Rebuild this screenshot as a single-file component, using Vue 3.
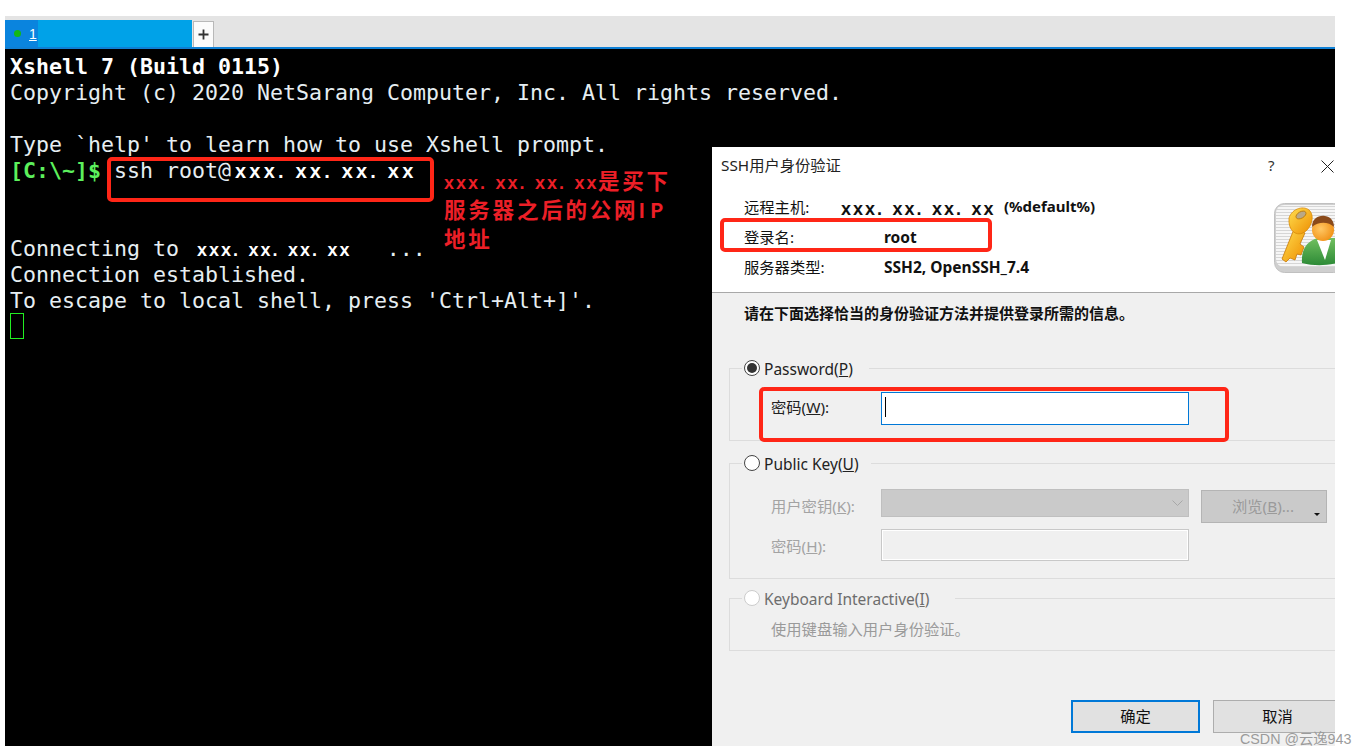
<script setup>
const infoRows = [
  { label: '远程主机:', value: 'xxx. xx. xx. xx', suffix: '(%default%)' },
  { label: '登录名:', value: 'root' },
  { label: '服务器类型:', value: 'SSH2, OpenSSH_7.4' }
]
</script>

<template>
  <div class="page">
    <div class="window">
      <div class="tabbar">
        <div class="tab">
          <span class="tab-num"><i class="dot"></i><u>1</u></span>
          <span class="tab-rest"></span>
        </div>
        <button class="plus" aria-label="new tab">
          <svg width="11" height="11" viewBox="0 0 11 11"><path d="M5.5 0.5v10M0.5 5.5h10" stroke="#333" stroke-width="1.8" fill="none"/></svg>
        </button>
      </div>

      <div class="terminal">
        <div class="line bold">Xshell 7 (Build 0115)</div>
        <div class="line">Copyright (c) 2020 NetSarang Computer, Inc. All rights reserved.</div>
        <div class="line">&nbsp;</div>
        <div class="line">Type `help' to learn how to use Xshell prompt.</div>
        <div class="line"><span class="prompt">[C:\~]$</span> ssh root@<span class="ip-big">xxx. xx. xx. xx</span></div>
        <div class="line">&nbsp;</div>
        <div class="line">&nbsp;</div>
        <div class="line">Connecting to<span class="ip-small ip-conn">xxx. xx. xx. xx</span><span class="dots">...</span></div>
        <div class="line">Connection established.</div>
        <div class="line">To escape to local shell, press 'Ctrl+Alt+]'.</div>
        <div class="cursor"></div>
      </div>

      <div class="mark mark-cmd"></div>
      <div class="note">
        <div><span class="ip-small note-ip">xxx. xx. xx. xx</span>是买下</div>
        <div>服务器之后的公网<span class="note-latin">IP</span></div>
        <div>地址</div>
      </div>

      <section class="dialog">
        <header class="head">
          <div class="titlebar">
            <span class="title">SSH用户身份验证</span>
            <span class="help">?</span>
            <svg class="close" width="13" height="13" viewBox="0 0 13 13"><path d="M0.5 0.5l12 12M12.5 0.5l-12 12" stroke="#222" stroke-width="1" fill="none"/></svg>
          </div>
          <div class="info">
            <div v-for="row in infoRows" :key="row.label" class="info-row">
              <span class="info-label">{{ row.label }}</span>
              <span class="info-value" :class="{ 'ip-small': row.suffix, 'info-ip': row.suffix }">{{ row.value }}</span>
              <span v-if="row.suffix" class="info-suffix">{{ row.suffix }}</span>
            </div>
          </div>
          <svg class="badge" width="70" height="70" viewBox="0 0 70 70">
            <defs>
              <pattern id="stripes" width="3" height="3" patternUnits="userSpaceOnUse">
                <rect width="3" height="3" fill="#f6f6f6"/>
                <rect width="3" height="1" fill="#d6d6d6"/>
              </pattern>
              <linearGradient id="gold" x1="0" y1="0" x2="1" y2="1">
                <stop offset="0" stop-color="#ffdf50"/>
                <stop offset="1" stop-color="#ee8d00"/>
              </linearGradient>
              <linearGradient id="shirt" x1="0" y1="0" x2="0" y2="1">
                <stop offset="0" stop-color="#72c060"/>
                <stop offset="1" stop-color="#2c8a36"/>
              </linearGradient>
              <radialGradient id="skin" cx="0.4" cy="0.45" r="0.7">
                <stop offset="0" stop-color="#ffc865"/>
                <stop offset="1" stop-color="#ef8a0c"/>
              </radialGradient>
            </defs>
            <rect x="0.5" y="0.5" width="69" height="69" rx="10" fill="#cfcfcf" stroke="#c0c0c0"/>
            <rect x="2" y="2" width="66" height="62" rx="8" fill="url(#stripes)"/>
            <path d="M20 26 L8 56 L12 59 L16 55 L21 57 L23 51 L27 52 L30 44 L26 41 L31 30 Z" fill="url(#gold)" stroke="#c87808" stroke-width="0.8"/>
            <path d="M15 15 C18 5 31 2 36 8 C41 14 37 26 29 30 C22 33 14 28 15 15 Z" fill="url(#gold)" stroke="#d98a08" stroke-width="0.8"/>
            <ellipse cx="27" cy="12" rx="5.5" ry="3.2" transform="rotate(-30 27 12)" fill="#b8a888" stroke="#b87808" stroke-width="0.8"/>
            <path d="M28 60 C27 46 33 38 44 35 L62 35 L64 60 C50 63 40 63 28 60 Z" fill="url(#shirt)"/>
            <path d="M43 37 L51 57 L57 37 Z" fill="#fff"/>
            <circle cx="49" cy="27" r="11" fill="url(#skin)"/>
            <path d="M38 24 C38 15 45 12 51 13 C57 14 60 18 60 24 C55 19 45 18 38 24 Z" fill="#8a4a1a"/>
          </svg>
        </header>

        <div class="body">
          <p class="instruction">请在下面选择恰当的身份验证方法并提供登录所需的信息。</p>

          <fieldset class="group group-password">
            <legend class="legend legend-password">
              <span class="radio radio-on"></span>
              <span class="legend-text">Password(<u>P</u>)</span>
            </legend>
            <div class="form-row">
              <label class="field-label label-up">密码(<u>W</u>):</label>
              <div class="input input-active"><i class="caret"></i></div>
            </div>
          </fieldset>

          <fieldset class="group group-key">
            <legend class="legend legend-key">
              <span class="radio"></span>
              <span class="legend-text">Public Key(<u>U</u>)</span>
            </legend>
            <div class="form-row row-select">
              <label class="field-label off label-key">用户密钥(<u>K</u>):</label>
              <div class="select">
                <svg width="11" height="6" viewBox="0 0 11 6"><path d="M0.5 0.5l5 5 5-5" stroke="#a8a8a8" fill="none"/></svg>
              </div>
              <div class="browse">浏览(<u>B</u>)...<i class="tri"></i></div>
            </div>
            <div class="form-row row-pass">
              <label class="field-label off label-down">密码(<u>H</u>):</label>
              <div class="input input-off"></div>
            </div>
          </fieldset>

          <fieldset class="group group-kbd">
            <legend class="legend legend-kbd off-legend">
              <span class="radio radio-off"></span>
              <span class="legend-text">Keyboard Interactive(<u>I</u>)</span>
            </legend>
            <div class="kbd-text">使用键盘输入用户身份验证。</div>
          </fieldset>

          <div class="actions">
            <button class="btn btn-primary">确定</button>
            <button class="btn">取消</button>
          </div>
        </div>

        <div class="mark mark-login"></div>
        <div class="mark mark-pass"></div>
      </section>
    </div>
    <div class="watermark">CSDN @云逸943</div>
  </div>
</template>

<style>
html, body { margin: 0; background: #fff; overflow: hidden; }
</style>

<style scoped>
.page {
  width: 1367px;
  height: 755px;
  padding: 16px 0 0 5px;
  box-sizing: border-box;
  background: #fff;
  position: relative;
  overflow: hidden;
}
.window {
  width: 1330px;
  height: 730px;
  position: relative;
  overflow: hidden;
  display: flex;
  flex-direction: column;
  background: #000;
}
.tabbar {
  flex: none;
  height: 33px;
  box-sizing: border-box;
  padding-top: 4px;
  display: flex;
  align-items: stretch;
  background: #e4e4e4;
  border-bottom: 2px solid #0f7fd4;
}
.tab { width: 187px; display: flex; }
.tab-num {
  width: 33px;
  background: #0a84de;
  color: #fff;
  font: 400 14px "Liberation Sans", sans-serif;
  display: flex;
  align-items: center;
  gap: 8px;
  padding-left: 9px;
  box-sizing: border-box;
}
.dot { width: 7px; height: 7px; border-radius: 50%; background: #14b814; flex: none; }
.tab-rest { flex: 1; background: #00a2e8; }
.plus {
  width: 21px;
  margin: 1px 0 0 1px;
  padding: 0;
  background: #fbfbfb;
  border: 1px solid #b8b8b8;
  border-bottom: 0;
  display: flex;
  align-items: center;
  justify-content: center;
}

.terminal {
  flex: 1;
  padding: 5px 0 0 5px;
  font-family: "DejaVu Sans Mono", monospace;
  font-size: 21.6px;
  color: #e6eef2;
  background: #000;
}
.line { height: 26px; line-height: 26px; white-space: pre; }
.bold { font-weight: 700; color: #fff; }
.prompt { color: #5cf05c; font-weight: 700; }
.ip-big {
  font: 700 20px "Liberation Sans", sans-serif;
  letter-spacing: 3.2px;
  margin-left: 4px;
  color: #fff;
}
.ip-small {
  font: 700 18px "Liberation Sans", sans-serif;
  letter-spacing: 2px;
  word-spacing: 1.5px;
}
.ip-conn { color: #fff; margin-left: 18px; }
.dots { margin-left: 35px; }
.cursor {
  width: 12px;
  height: 24px;
  margin-top: -1px;
  border: 1px solid #22ee22;
}

.mark {
  position: absolute;
  border: 4px solid #ff2617;
  border-radius: 5px;
  box-sizing: border-box;
  pointer-events: none;
}
.mark-cmd { left: 102px; top: 141px; width: 327px; height: 45px; }
.note {
  position: absolute;
  left: 439px;
  top: 150px;
  color: #ec1f27;
  font: 700 21.5px/28.5px "Noto Sans CJK SC", sans-serif;
  letter-spacing: 2.8px;
  white-space: nowrap;
}
.note-ip { display: inline-block; width: 154px; }
.note-latin { font-size: 20px; letter-spacing: 5px; }

.dialog {
  position: absolute;
  left: 707px;
  top: 131px;
  width: 623px;
  height: 599px;
  overflow: hidden;
  display: flex;
  flex-direction: column;
  background: #f0f0f0;
  color: #111;
  font-family: "Noto Sans", "Noto Sans CJK SC", sans-serif;
  font-size: 15.3px;
}
.head {
  flex: none;
  height: 146px;
  box-sizing: border-box;
  background: #fff;
  border-bottom: 1px solid #a8a8a8;
  position: relative;
}
.titlebar {
  height: 45px;
  padding: 7px 0 0 9px;
  box-sizing: border-box;
  display: flex;
  align-items: flex-start;
  line-height: 22px;
}
.title { flex: 1; color: #222; }
.help { width: 53px; font-size: 15px; color: #333; margin-left: -1px; }
.close { margin: 6px 1px 0 0; flex: none; }
.info { padding-left: 32px; }
.info-row { height: 30px; line-height: 30px; display: flex; white-space: nowrap; }
.info-label { width: 140px; flex: none; }
.info-value { font-weight: 700; font-size: 15.5px; }
.info-ip {
  margin-left: -43px;
  margin-top: 2px;
  font-size: 18px;
  line-height: 30px;
  width: 163px;
}
.info-suffix { font-weight: 700; font-size: 15px; margin-top: -1px; }
.badge { position: absolute; left: 562px; top: 56px; }

.body { flex: 1; display: flex; flex-direction: column; }
.instruction {
  margin: 10px 0 0 32px;
  line-height: 20px;
  font-weight: 700;
  font-size: 15px;
  color: #111;
}
.group {
  margin: 0 -12px 0 17px;
  padding: 0;
  border: 1px solid #dcdcdc;
  min-width: 0;
}
.group-password { margin-top: 35px; height: 83px; box-sizing: border-box; padding-top: 14px; }
.group-key { margin-top: 12px; height: 126px; box-sizing: border-box; padding-top: 16px; }
.group-kbd { margin-top: 9px; height: 63px; box-sizing: border-box; padding-top: 11px; }
.legend {
  height: 20px;
  padding: 0 0 0 2px;
  margin-left: 12px;
  display: flex;
  align-items: center;
  gap: 4px;
  line-height: 20px;
  white-space: nowrap;
  color: #222;
  box-sizing: border-box;
  font-size: 15.5px;
}
.legend-text { padding-top: 2px; }
.legend-password { width: 127px; }
.legend-key { width: 129px; }
.legend-kbd { width: 213px; }
.off-legend { color: #6d6d6d; }
.radio {
  width: 16px;
  height: 16px;
  flex: none;
  box-sizing: border-box;
  border-radius: 50%;
  border: 1px solid #444;
  background: #fff;
  position: relative;
}
.radio-on::after {
  content: "";
  position: absolute;
  inset: 2px;
  border-radius: 50%;
  background: #333;
}
.radio-off { border-color: #ccc; }
.form-row { display: flex; align-items: center; padding-left: 41px; }
.row-select { height: 34px; align-items: flex-start; }
.row-pass { margin-top: 6px; }
.field-label { width: 110px; flex: none; line-height: 30px; color: #222; }
.label-up { margin-top: -4px; }
.label-key { margin-top: 2px; }
.label-down { margin-top: 2px; }
.off { color: #a3a3a3; }
.input {
  width: 308px;
  box-sizing: border-box;
  flex: none;
  position: relative;
}
.input-active { height: 33px; background: #fff; border: 1px solid #0078d7; }
.caret { position: absolute; left: 3px; top: 4px; width: 1px; height: 20px; background: #000; }
.input-off { height: 32px; background: #f0f0f0; border: 1px solid #c8c8c8; box-shadow: inset 0 0 0 1px #fff; }
.select {
  width: 308px;
  height: 28px;
  flex: none;
  box-sizing: border-box;
  background: #cacaca;
  border: 1px solid #bfbfbf;
  display: flex;
  align-items: center;
  justify-content: flex-end;
  padding-right: 5px;
}
.browse {
  width: 126px;
  height: 33px;
  margin: 1px 0 0 12px;
  flex: none;
  box-sizing: border-box;
  background: #cacaca;
  border: 1px solid #b4b4b4;
  color: #9a9a9a;
  line-height: 31px;
  text-align: center;
  position: relative;
  padding-right: 2px;
}
.tri {
  position: absolute;
  right: 6px;
  bottom: 6px;
  border: 3px solid transparent;
  border-top: 3px solid #111;
  border-bottom: 0;
}
.kbd-text { padding-left: 41px; line-height: 20px; color: #9a9a9a; }
.actions {
  margin-top: auto;
  margin-bottom: 13px;
  padding-left: 359px;
  display: flex;
  gap: 13px;
}
.btn {
  width: 129px;
  height: 33px;
  flex: none;
  padding: 0 0 3px;
  box-sizing: border-box;
  background: #e1e1e1;
  border: 1px solid #adadad;
  font: inherit;
  color: #111;
}
.btn-primary { border: 2px solid #0078d7; }

.mark-login { left: 8px; top: 71px; width: 272px; height: 34px; }
.mark-pass { left: 47px; top: 240px; width: 470px; height: 55px; }

.watermark {
  position: absolute;
  left: 1240px;
  top: 730px;
  font: 14.3px/18px "Liberation Sans", "Noto Sans CJK SC", sans-serif;
  color: #9b9b9b;
  white-space: nowrap;
}
</style>
